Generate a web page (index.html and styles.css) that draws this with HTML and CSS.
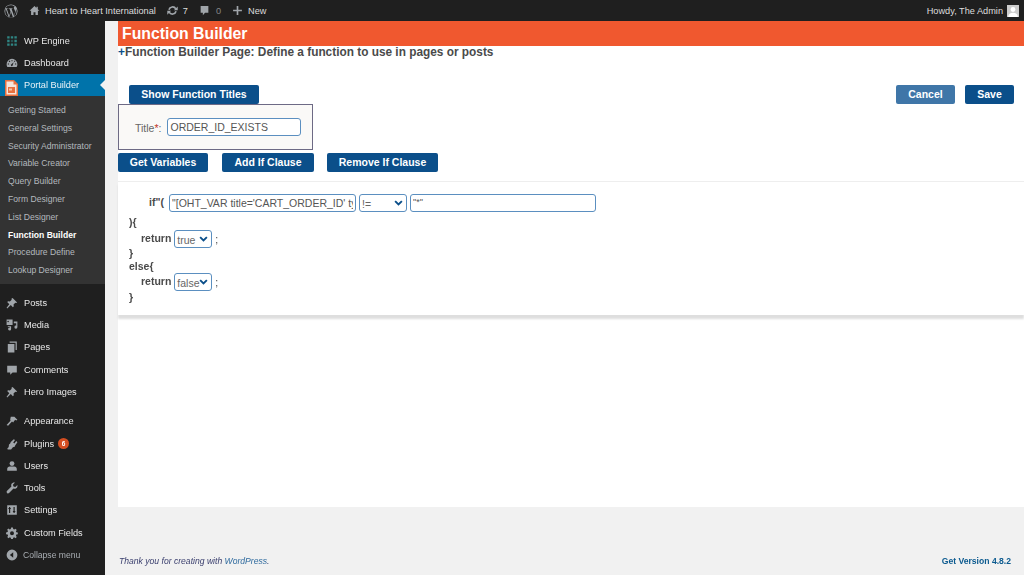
FILE: index.html
```html
<!DOCTYPE html>
<html lang="en">
<head>
<meta charset="utf-8">
<title>Function Builder</title>
<link rel="stylesheet" href="styles.css">
</head>
<body>
<header class="adminbar">
  <div class="bar-left">
    <svg class="bar-wp" viewBox="0 0 20 20"><path d="M10 .6a9.4 9.4 0 1 0 0 18.8A9.4 9.4 0 0 0 10 .6zm0 1.2c2.2 0 4.200.9 5.700 2.300-.9 0-1.700.8-1.700 1.700 0 .8.500 1.500 1 2.300.4.700.8 1.500.8 2.700 0 .8-.3 1.800-.7 3.100l-.9 3-3.300-9.900c.6 0 1-.1 1-.1.500 0 .5-.8 0-.8 0 0-1.500.1-2.500.1-.9 0-2.400-.1-2.400-.1-.5 0-.6.800 0 .8 0 0 .5.100 1 .1l1.400 3.900-2 6-3.300-9.900c.5 0 1-.1 1-.1.500 0 .5-.8 0-.8 0 0-1.500.1-2.400.1h-.6A8.200 8.200 0 0 1 10 1.800zM2.400 6.700l4.300 11.700a8.200 8.200 0 0 1-4.900-7.400c0-1.500.2-3 .6-4.300zm14.800.1c.6 1.100 1 2.400 1 4.200a8.200 8.200 0 0 1-4.100 7.100l2.500-7.300c.5-1.200.7-2.200.7-3 0-.4 0-.7-.1-1zM10.100 11.600l2.500 6.900a8.200 8.200 0 0 1-5 .1z"/></svg>
    <span class="bar-item"><svg class="bar-ico" viewBox="0 0 20 20"><path d="M10 2 1 10.500h2.800V18h4.400v-5h3.600v5h4.400v-7.500H19L16 7.700V3h-2.500v2.300z"/></svg>Heart to Heart International</span>
    <span class="bar-item bar-gap"><svg class="bar-ico" viewBox="0 0 20 20"><path class="sync-arc" d="M3.500 8.500A6.800 6.800 0 0 1 16 7M16.500 11.500A6.800 6.800 0 0 1 4 13"/><path d="M19.500 2.500v7h-7zM.5 17.500v-7h7z"/></svg>7</span>
    <span class="bar-item bar-gap"><svg class="bar-ico" viewBox="0 0 20 20"><path d="M3 2h14v12h-6l-4 4.500V14H3z"/></svg><span class="dim">0</span></span>
    <span class="bar-item bar-gap"><svg class="bar-ico" viewBox="0 0 20 20"><path d="M8.500 2h3v6.500H18v3h-6.500V18h-3v-6.500H2v-3h6.500z"/></svg>New</span>
  </div>
  <div class="bar-right">Howdy, The Admin<span class="avatar"><svg viewBox="0 0 20 20"><circle cx="10" cy="7.500" r="4"/><path d="M2 20c0-5 3.500-7 8-7s8 2 8 7z"/></svg></span></div>
</header>

<div class="layout">
  <nav class="sidebar">
    <ul class="menu menu-top">
      <li class="item"><svg class="ico ico-teal" viewBox="0 0 20 20"><path d="M2 2h4v4H2zM8 2h4v4H8zM14 2h4v4h-4zM2 8h4v4H2zM14 8h4v4h-4zM2 14h4v4H2zM8 14h4v4H8zM14 14h4v4h-4z"/><path d="M8 8h4v4H8z" opacity=".5"/></svg>WP Engine</li>
      <li class="item"><svg class="ico" viewBox="0 0 20 20"><path d="M10 3a9 9 0 0 0-9 9c0 1.700.4 3.200 1.200 4.500h15.600A9 9 0 0 0 19 12a9 9 0 0 0-9-9zm-.7 2h1.400v2H9.300zM4.500 7l1.500-1 1.200 1.600-1.300 1zm8.700-.1L14.500 6l1 1-1.400 1.400zM3 11h2v1.400H3zm12 0h2v1.400h-2zm-4.200 3.500a1.500 1.500 0 1 1-1.600-2.400l3.500-3.400z"/></svg>Dashboard</li>
      <li class="item current"><svg class="ico-doc" viewBox="0 0 13 16"><path fill="#e8703f" d="M0 0h9l4 4v12H0z"/><path fill="#f7e6dc" d="M1.500 1.500h7v3h3v10h-10z"/><path fill="#e8703f" d="M3 7h7v6H3z"/><path fill="#f9c6a8" d="M4 8.500h3v2H4z"/></svg>Portal Builder</li>
    </ul>
    <ul class="submenu">
      <li>Getting Started</li>
      <li>General Settings</li>
      <li>Security Administrator</li>
      <li>Variable Creator</li>
      <li>Query Builder</li>
      <li>Form Designer</li>
      <li>List Designer</li>
      <li class="active">Function Builder</li>
      <li>Procedure Define</li>
      <li>Lookup Designer</li>
    </ul>
    <ul class="menu menu-mid">
      <li class="item"><svg class="ico" viewBox="0 0 20 20"><path d="M11 1.500l7.500 7.500-1.500 1-1.500-.5-3 3 .5 3-1.500 1.500-3.500-3.500L2 19l-1-1 4.500-6L2 8.500 3.500 7l3 .5 3-3L9 3z"/></svg>Posts</li>
      <li class="item"><svg class="ico" viewBox="0 0 20 20"><path fill-rule="evenodd" d="M1 1h10v9H1zm2.500 2a1.300 1.300 0 1 0 0 2.600 1.300 1.300 0 0 0 0-2.600z"/><path d="M13 4h6v9.500a2.500 2.500 0 1 1-2-2.400V7h-4zM3 12h5.500v4.500a2.500 2.500 0 1 1-2-2.400V13.500H3z"/></svg>Media</li>
      <li class="item"><svg class="ico" viewBox="0 0 20 20"><path d="M6 1h12v14h-2V3H6zM3 5h11v14H3z"/></svg>Pages</li>
      <li class="item"><svg class="ico" viewBox="0 0 20 20"><path d="M2 3h16v11h-7l-4 4v-4H2z"/></svg>Comments</li>
      <li class="item"><svg class="ico" viewBox="0 0 20 20"><path d="M11 1.500l7.500 7.500-1.500 1-1.500-.5-3 3 .5 3-1.500 1.500-3.500-3.500L2 19l-1-1 4.500-6L2 8.500 3.500 7l3 .5 3-3L9 3z"/></svg>Hero Images</li>
    </ul>
    <ul class="menu menu-low">
      <li class="item"><svg class="ico" viewBox="0 0 20 20"><path d="M8 3h6l5 5-2 1-1.500-1-2 2-1.500 2.500-2-1.500-6.500 7-2.500-1.500 6.500-7L7 7.500z"/></svg>Appearance</li>
      <li class="item"><svg class="ico" viewBox="0 0 20 20"><path d="M13 2l2 1.500-3 4 2 1.500 3-4 2 2-3.500 5-1 2.500-3 1-3 3.500H6L3 19l-1-1 2.500-3 .5-4 2-2 1-2.500z"/></svg>Plugins<span class="badge">6</span></li>
      <li class="item"><svg class="ico" viewBox="0 0 20 20"><circle cx="10" cy="6" r="4"/><path d="M2 18v-3c0-2.500 2-4 4-4h8c2 0 4 1.500 4 4v3z"/></svg>Users</li>
      <li class="item"><svg class="ico" viewBox="0 0 20 20"><path d="M19 5l-3.500 3.500-3-1-1-3L15 1c-2.500-.6-5 .5-6 2.500-.6 1.300-.5 2.800 0 4L1.500 15A2.500 2.500 0 0 0 5 18.500l7.500-7.500c1.200.5 2.700.6 4 0 2-1 3.100-3.500 2.500-6z"/></svg>Tools</li>
      <li class="item"><svg class="ico" viewBox="0 0 20 20"><path fill-rule="evenodd" d="M2 2h16v16H2zM5 5v1.500H4v2h1V15h2V8.500h1v-2H7V5zm7.500 0v6.500h-1v2h1V15h2v-1.500h1v-2h-1V5z"/></svg>Settings</li>
      <li class="item"><svg class="ico" viewBox="0 0 20 20"><path fill-rule="evenodd" d="M8.500 1h3l.5 2.500 1.700.7 2.100-1.400 2.100 2.100-1.400 2.100.7 1.700 2.500.5v3l-2.500.5-.7 1.700 1.400 2.100-2.100 2.100-2.100-1.400-1.700.7-.5 2.500h-3l-.5-2.500-1.700-.7-2.100 1.400-2.100-2.100 1.400-2.100-.7-1.700L.1 12V9l2.500-.5.7-1.700-1.400-2.100 2.100-2.100 2.100 1.400L8 3.300zM10 7a3.300 3.300 0 1 0 0 6.600A3.300 3.300 0 0 0 10 7z"/></svg>Custom Fields</li>
      <li class="item collapse"><svg class="ico" viewBox="0 0 20 20"><path fill-rule="evenodd" d="M10 1a9 9 0 1 0 0 18 9 9 0 0 0 0-18zm2 4.500v9L6.500 10z"/></svg>Collapse menu</li>
    </ul>
  </nav>

  <div class="main">
    <main class="panel">
      <h1 class="page-title">Function Builder</h1>
      <p class="subtitle"><span class="plus">+</span>Function Builder Page: Define a function to use in pages or posts</p>

      <div class="top-actions">
        <button class="btn btn-show">Show Function Titles</button>
        <div class="actions-right">
          <button class="btn btn-cancel">Cancel</button>
          <button class="btn btn-save">Save</button>
        </div>
      </div>

      <div class="title-box">
        <label class="title-label">Title<span class="req">*</span>:</label>
        <input class="field field-title" value="ORDER_ID_EXISTS">
      </div>

      <div class="clause-actions">
        <button class="btn btn-vars">Get Variables</button>
        <button class="btn btn-add">Add If Clause</button>
        <button class="btn btn-remove">Remove If Clause</button>
      </div>

      <section class="code">
        <div class="if-row">
          <b class="kw">if"(</b>
          <input class="field field-left" value="&quot;[OHT_VAR title='CART_ORDER_ID' type='session']&quot;">
          <span class="sel sel-op">!=<svg viewBox="0 0 12 8"><path d="M1.500 1.500 6 6l4.500-4.500"/></svg></span>
          <input class="field field-right" value="&quot;*&quot;">
        </div>
        <div class="line">){</div>
        <div class="ret-row"><b class="kw">return</b><span class="sel sel-bool">true<svg viewBox="0 0 12 8"><path d="M1.500 1.500 6 6l4.500-4.500"/></svg></span><b class="semi">;</b></div>
        <div class="line line-close">}</div>
        <div class="line">else{</div>
        <div class="ret-row ret-else"><b class="kw">return</b><span class="sel sel-bool">false<svg viewBox="0 0 12 8"><path d="M1.500 1.500 6 6l4.500-4.500"/></svg></span><b class="semi">;</b></div>
        <div class="line">}</div>
      </section>
    </main>
    <footer class="foot">
      <em>Thank you for creating with <span class="foot-link">WordPress</span>.</em>
      <strong class="foot-strong">Get Version 4.8.2</strong>
    </footer>
  </div>
</div>
</body>
</html>
```

FILE: styles.css
```css
* { box-sizing: border-box; }
html, body { margin: 0; padding: 0; }
body {
  width: 1024px;
  height: 575px;
  overflow: hidden;
  background: #f1f1f1;
  font-family: "Liberation Sans", Arial, sans-serif;
  color: #444;
  filter: blur(.3px);
}
ul { list-style: none; margin: 0; padding: 0; }

.adminbar {
  height: 21px;
  background: #1f1f1f;
  color: #ddd;
  font-size: 9.200px;
  display: flex;
  justify-content: space-between;
  align-items: center;
  padding: 0 5px 0 4px;
}
.bar-left { display: flex; align-items: center; }
.bar-wp { width: 14px; height: 14px; fill: #a0a5aa; margin-right: 11px; }
.bar-item { display: flex; align-items: center; }
.bar-ico { width: 11px; height: 11px; fill: #a0a5aa; margin-right: 5px; }
.sync-arc { fill: none; stroke: #a0a5aa; stroke-width: 3; }
.bar-gap { margin-left: 11px; }
.dim { color: #888; margin-left: 1px; }
.bar-right { display: flex; align-items: center; }
.avatar { width: 12px; height: 12px; background: #ccc; margin-left: 4px; display: block; }
.avatar svg { display: block; width: 12px; height: 12px; fill: #fff; }

.layout { display: flex; height: 554px; }

.sidebar { width: 105px; background: #1f1f1f; flex: none; color: #e8e8e8; }
.item {
  height: 22.300px;
  display: flex;
  align-items: center;
  font-size: 9.200px;
  padding: 1px 0 0 6px;
  position: relative;
}
.ico { width: 12px; height: 12px; fill: #a0a5aa; margin-right: 6px; flex: none; }
.ico-teal { fill: #2f8583; }
.ico-doc { width: 13px; height: 16px; margin: 5px 6px 0 -1px; flex: none; }
.menu-top { padding-top: 8px; }
.current { background: #0073aa; color: #e8f2f7; height: 22.500px; }
.current::after {
  content: "";
  position: absolute;
  right: 0;
  top: 6px;
  border: 5px solid transparent;
  border-right-color: #f1f1f1;
  border-left-width: 0;
}
.submenu { background: #333; padding: 6px 0 4px; height: 188px; }
.submenu li {
  height: 17.800px;
  line-height: 17.800px;
  font-size: 8.600px;
  color: #b4b9be;
  padding-left: 8px;
}
.submenu .active { color: #fff; font-weight: 700; }
.menu-mid { padding-top: 7px; }
.menu-low { padding-top: 7px; }
.badge {
  width: 11px;
  height: 11px;
  border-radius: 50%;
  background: #d54e21;
  color: #fff;
  font-size: 6.500px;
  line-height: 11px;
  text-align: center;
  margin-left: 4px;
  font-weight: 700;
}
.collapse { color: #a9aeb3; font-size: 8.600px; }
.collapse .ico { margin-right: 5px; }

.main { flex: 1; padding-left: 13px; display: flex; flex-direction: column; min-width: 0; }
.panel { background: #fff; height: 486px; flex: none; }
.page-title {
  margin: 0;
  height: 25px;
  background: #f0582f;
  color: #fff;
  font-size: 15.800px;
  line-height: 25px;
  font-weight: 700;
  padding-left: 4px;
}
.subtitle {
  margin: 0;
  height: 39px;
  font-size: 11.850px;
  line-height: 13px;
  font-weight: 700;
  color: #4a4a4a;
}
.plus { color: #0b4f8a; }

.btn {
  display: block;
  height: 19px;
  border: 0;
  border-radius: 2px;
  background: #0b4f8a;
  color: #fff;
  font: 700 10.500px "Liberation Sans", Arial, sans-serif;
  padding: 0 0 2px;
  text-align: center;
}
.top-actions { display: flex; justify-content: space-between; padding: 0 10px 0 11px; }
.btn-show { width: 130px; }
.actions-right { display: flex; gap: 10px; }
.btn-cancel { width: 59px; background: #3f76a8; }
.btn-save { width: 49px; }

.title-box {
  width: 195px;
  height: 46px;
  border: 1px solid #6d6a85;
  background: #faf9f7;
  display: flex;
  align-items: center;
  padding-left: 16px;
}
.title-label { font-size: 10.500px; color: #666; margin-right: 6px; margin-top: 2px; }
.req { color: #c0392b; }
.field {
  height: 18px;
  border: 1px solid #5b8fc0;
  border-radius: 3px;
  background: #fff;
  color: #555;
  font: 10.500px "Liberation Sans", Arial, sans-serif;
  padding: 0 2px;
  outline: 0;
  display: block;
}
.field-title { width: 134px; padding-bottom: 1px; }

.clause-actions { display: flex; margin-top: 3px; }
.btn-vars { width: 90px; }
.btn-add { width: 92px; margin-left: 14px; }
.btn-remove { width: 111px; margin-left: 13px; }

.code {
  margin-top: 9px;
  height: 134px;
  border-top: 1px solid #eee;
  font-size: 10.500px;
  color: #4a4a4a;
  font-weight: 700;
  padding: 12px 0 0 11px;
  box-shadow: 0 4px 2px #dedede;
}
.if-row { display: flex; align-items: center; padding-left: 20px; height: 18px; }
.if-row .kw { width: 20px; margin-top: -2px; }
.field-left { width: 187px; font-weight: 400; font-size: 10.500px; }
.field-right { width: 186px; margin-left: 3px; font-weight: 400; font-size: 9px; padding-bottom: 3px; }
.sel {
  position: relative;
  display: block;
  height: 18px;
  border: 1px solid #5b8fc0;
  border-radius: 3px;
  background: #fff;
  font-weight: 400;
  font-size: 10.500px;
  color: #666;
  line-height: 19px;
  padding-left: 2px;
}
.sel svg {
  position: absolute;
  right: 3px;
  top: 5px;
  width: 9px;
  height: 6px;
  fill: none;
  stroke: #0b4f8a;
  stroke-width: 2.500;
}
.sel-op { width: 48px; margin-left: 3px; }
.sel-bool { width: 38px; margin-left: 3px; }
.line { height: 13px; line-height: 13px; }
.if-row + .line { margin-top: 4px; }
.ret-row { display: flex; align-items: center; height: 18px; padding-left: 12px; margin-top: 1px; }
.ret-row .kw { margin-top: -3px; }
.semi { margin-left: 3px; font-weight: 400; }
.line-close { margin-top: -1px; }
.ret-else { margin-top: 0; }

.foot {
  flex: 1;
  display: flex;
  justify-content: space-between;
  align-items: flex-start;
  padding: 49px 13px 0 1px;
  font-size: 8.600px;
  color: #3a3f6e;
}
.foot em { font-style: italic; }
.foot-link { color: #2e6a9e; }
.foot-strong { color: #0b5a8f; }
```
